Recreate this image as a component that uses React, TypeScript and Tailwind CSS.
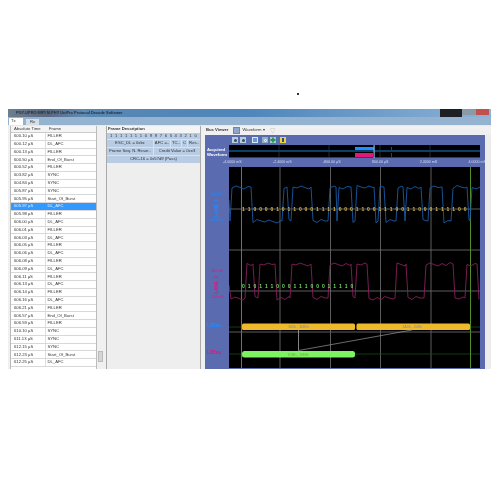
const frames: [string, string][] = [
  ['600.10', 'FILLER'], ['600.12', 'DL_AFC'], ['600.13', 'FILLER'], ['600.50', 'End_Of_Burst'],
  ['600.52', 'FILLER'], ['603.82', 'SYNC'], ['604.84', 'SYNC'], ['605.87', 'SYNC'],
  ['605.95', 'Start_Of_Burst'], ['605.97', 'DL_AFC'], ['605.98', 'FILLER'], ['606.00', 'DL_AFC'],
  ['606.01', 'FILLER'], ['606.03', 'DL_AFC'], ['606.05', 'FILLER'], ['606.06', 'DL_AFC'],
  ['606.08', 'FILLER'], ['606.09', 'DL_AFC'], ['606.11', 'FILLER'], ['606.13', 'DL_AFC'],
  ['606.14', 'FILLER'], ['606.16', 'DL_AFC'], ['606.21', 'FILLER'], ['606.57', 'End_Of_Burst'],
  ['606.59', 'FILLER'], ['610.10', 'SYNC'], ['611.13', 'SYNC'], ['612.15', 'SYNC'],
  ['612.23', 'Start_Of_Burst'], ['612.25', 'DL_AFC'],
]

// high segments of each lane, in page x
const blueHigh: [number, number][] = [[232, 251], [284, 287], [293, 311], [330, 336], [339, 351], [357, 374], [380, 384], [398, 403], [407, 421], [430, 442], [453, 467], [472, 480]]
const redHigh: [number, number][] = [[247, 253], [260, 275], [292, 311], [330, 351], [357, 367], [397, 406], [426, 453], [467, 477]]

const blueBits = '1100001011000111100011001110011000111100'
const redBits = '01011100011100011110'

function wave(high: [number, number][], top: number, bottom: number, start: string) {
  const pts: string[] = [start]
  let x = 229
  let n = 0
  const jitter = () => [1, -1, 0.5, 2, -0.5, 1.5, -1.5, 0][n++ % 8]
  high.forEach(([a, b]) => {
    for (let i = Math.max(x, 231); i < a - 2; i += 4) pts.push(`${i},${bottom + jitter()}`)
    pts.push(`${a - 2},${bottom}`)
    for (let i = a; i < b; i += 4) pts.push(`${i},${top + jitter()}`)
    pts.push(`${b},${top}`)
    x = b + 2
  })
  for (let i = x; i < 480; i += 4) pts.push(`${i},${bottom + jitter()}`)
  return pts.join(' ')
}

function Plot() {
  return (
    <svg width="251" height="201" viewBox="229 167 251 201" className="block bg-black shrink-0" fontFamily="'Liberation Sans', sans-serif">
      {[280, 330.5, 380.5, 431].map((x) => (
        <line key={x} x1={x} x2={x} y1="167" y2="368" stroke="#666" strokeWidth="0.9" />
      ))}
      {[209, 250, 291, 332].map((y) => (
        <line key={y} x1="229" x2="480" y1={y} y2={y} stroke="#666" strokeWidth="0.9" />
      ))}
      <line x1="229" x2="480" y1="327" y2="327" stroke="#164a16" strokeWidth="0.8" />
      <line x1="229" x2="480" y1="354" y2="354" stroke="#164a16" strokeWidth="0.8" />
      <line x1="241.5" x2="241.5" y1="167" y2="368" stroke="#5a9a2c" strokeWidth="0.9" />
      <line x1="470.5" x2="470.5" y1="167" y2="368" stroke="#5a9a2c" strokeWidth="0.9" />

      <polyline points={wave(blueHigh, 187, 221, '229,200')} fill="none" stroke="#1a5aa8" strokeWidth="0.9" strokeLinejoin="round" />
      <polyline points={wave(redHigh, 264, 298, '229,285')} fill="none" stroke="#86205a" strokeWidth="0.9" strokeLinejoin="round" />

      {blueBits.split('').map((b, i) => (
        <text key={i} x={243.5 + i * 5.68} y="210.8" fontSize="5" fontWeight="bold" fill="#dcb84c" textAnchor="middle">{b}</text>
      ))}
      {redBits.split('').map((b, i) => (
        <text key={i} x={243.5 + i * 5.7} y="287.8" fontSize="5" fontWeight="bold" fill="#72dc66" textAnchor="middle">{b}</text>
      ))}

      <rect x="242" y="323.5" width="113" height="6.5" rx="1.5" fill="#eeba2c" />
      <rect x="356.5" y="323.5" width="113.5" height="6.5" rx="1.5" fill="#eeba2c" />
      <rect x="242" y="351" width="113" height="6.5" rx="2.5" fill="#7df262" />
      <line x1="298.5" y1="330" x2="298.5" y2="350.5" stroke="#bbb" strokeWidth="0.7" />
      <line x1="298.5" y1="350.5" x2="412" y2="330" stroke="#999" strokeWidth="0.7" />
      <text x="298.5" y="328.3" fontSize="3.6" fill="#6f8fb0" textAnchor="middle">300h , 3f4Bh</text>
      <text x="412" y="328.3" fontSize="3.6" fill="#6f8fb0" textAnchor="middle">1A0h , 208h</text>
      <text x="298.5" y="355.8" fontSize="3.6" fill="#8f9a50" textAnchor="middle">67Ah , 3f4Bh</text>
    </svg>
  )
}

function Overview() {
  return (
    <svg width="251" height="13" viewBox="229 145 251 13" className="block bg-black shrink-0">
      {[279, 329, 380, 430].map((x) => (
        <line key={x} x1={x} x2={x} y1="145" y2="158" stroke="#444" strokeWidth="0.6" />
      ))}
      <rect x="229" y="150" width="251" height="2" fill="#0a3f68" />
      <rect x="355" y="147" width="19" height="3" fill="#1e90ff" />
      <rect x="355" y="153" width="18" height="4" fill="#e0187c" />
      <rect x="229" y="157" width="251" height="1" fill="#7c1a50" />
      <rect x="373.5" y="145" width="1.2" height="13" fill="#7fb4e0" />
      <rect x="391" y="147" width="1" height="3" fill="#1e4f90" />
      <rect x="391" y="153" width="1" height="4" fill="#7c1a50" />
    </svg>
  )
}

function ToolIcon({ bg, children, className = '' }: { bg: string; children?: React.ReactNode; className?: string }) {
  return (
    <div className={`w-[6px] h-[6px] shrink-0 flex items-center justify-center ${bg} ${className}`}>{children}</div>
  )
}

export default function App() {
  return (
    <div className="w-[500px] h-[500px] bg-white overflow-hidden font-['Liberation_Sans',sans-serif] text-[4.2px] leading-none text-[#333]">
      <div className="h-[109px] pt-[93px]">
        <div className="ml-[297px] w-[1.5px] h-[1.5px] bg-[#333]" />
      </div>

      <div className="ml-2 w-[483px] h-[260px] flex flex-col bg-[#f0f0f0] blur-[0.25px]">
        {/* title bar */}
        <div className="h-2 flex items-center bg-gradient-to-r from-[#5c87ad] via-[#4f86bb] to-[#8cb2d6]">
          <div className="w-[78px] h-full bg-gradient-to-r from-[#6b7f8f] via-[#5a6880] to-[#5f8db8] flex items-center pl-2 text-[#22303c] font-bold text-[3.9px] whitespace-nowrap">
            PGY-UPRO MIPI M-PHY UniPro Protocol Decode Software
          </div>
          <div className="flex-1" />
          <div className="w-[22px] h-full bg-[#1c2024]" />
          <div className="w-[14px] h-[6px] mb-[2px] bg-[#8a9aa8]" />
          <div className="w-[13px] h-[6px] mb-[2px] mr-[2px] bg-[#c0504d]" />
        </div>

        {/* tabs */}
        <div className="h-2 flex items-end gap-[3px] bg-[#93b3d0] pl-[1px]">
          <div className="w-[14px] h-[7px] bg-white flex items-center pl-[2px]">Tx</div>
          <div className="w-[13px] h-[6px] bg-[#d5dde6] flex items-center pl-[4px]">Rx</div>
        </div>

        <div className="flex-1 flex min-h-0 border-t border-[#e8e8e8]">
          {/* frame list */}
          <div className="ml-[2px] w-[87px] bg-white overflow-hidden border-x border-[#bbb]">
            <div className="h-[7px] flex items-center bg-[#f4f4f4] border-b border-[#ccc]">
              <span className="w-[35px] pl-[3px] whitespace-nowrap">Absolute Time</span>
              <span className="pl-[3px]">Frame</span>
            </div>
            {frames.map(([time, name]) => {
              const selected = time === '605.97'
              return (
                <div key={time} className={`h-[7.8px] flex items-center border-b border-[#d8d8d8] ${selected ? 'bg-[#3399ff] text-[#dfefff]' : ''}`}>
                  <span className={`w-[35px] h-full flex items-center pl-[3px] border-r ${selected ? 'border-[#3399ff]' : 'border-[#ddd]'}`}>{time} µS</span>
                  <span className="pl-[1.5px] whitespace-nowrap">{name}</span>
                </div>
              )
            })}
          </div>

          {/* scrollbar */}
          <div className="w-[7px] flex flex-col items-center justify-end pb-[6px] bg-[#f0f0f0]">
            <div className="w-[5px] h-[11px] bg-[#d4d4d4] border border-[#bbb] mb-[1px]" />
          </div>

          {/* frame description */}
          <div className="ml-[2px] w-[95px] flex flex-col border-x border-[#aaa] bg-[#eeeeee]">
            <div className="h-[7px] flex items-center pl-[1px] font-bold bg-[#f4f4f4]">Frame Description</div>
            <div className="h-[6px] flex justify-between items-center px-[3px] bg-[#b8cce4]">
              {['1', '1', '1', '1', '1', '1', '1', '0', '9', '8', '7', '6', '5', '4', '3', '2', '1', '0'].map((b, i) => (
                <span key={i}>{b}</span>
              ))}
            </div>
            <div className="h-2 flex bg-[#b8cce4] border-t border-[#d8e2ee] whitespace-nowrap">
              <span className="w-[47px] flex items-center justify-center border-r border-[#d8e2ee]">ESC_DL = 0xbc</span>
              <span className="w-[17px] flex items-center justify-center border-r border-[#d8e2ee]">AFC =..</span>
              <span className="w-[11px] flex items-center justify-center border-r border-[#d8e2ee]">TC..</span>
              <span className="w-[6px] flex items-center justify-center border-r border-[#d8e2ee]">C</span>
              <span className="flex-1 flex items-center justify-center">Res..</span>
            </div>
            <div className="h-2 flex bg-[#b8cce4] border-t border-[#d8e2ee] whitespace-nowrap">
              <span className="w-[47px] flex items-center justify-center border-r border-[#d8e2ee]">Frame Seq. N. Reser..</span>
              <span className="flex-1 flex items-center justify-center">Credit Value = 0xe3</span>
            </div>
            <div className="h-2 flex items-center justify-center bg-[#b8cce4] border-t border-[#d8e2ee]">CRC-16 = 0x57d9 (Pass)</div>
          </div>

          {/* bus viewer */}
          <div className="ml-[4px] w-[286px] flex flex-col min-w-0">
            <div className="h-[9px] flex items-center gap-[3px] pl-[1px]">
              <span className="font-bold whitespace-nowrap">Bus Viewer</span>
              <div className="w-[7px] h-[7px] ml-[1px] bg-[#8fa6c8] border border-[#6f86a8]" />
              <span className="whitespace-nowrap">Waveform ▾</span>
              <span className="ml-[2px] text-[#c8c8c8] text-[7px]">▽</span>
            </div>
            <div className="flex-1 flex min-h-0">
              <div className="w-[280px] flex flex-col bg-[#5a6bb0] pl-[24px] pr-[5px] min-h-0">
                <div className="h-[10px] flex items-center gap-[2px] pl-[3px]">
                  <ToolIcon bg="bg-[#b9ccd8]"><span className="w-[3px] h-[3px] rounded-full bg-[#33506e]" /></ToolIcon>
                  <ToolIcon bg="bg-[#b9ccd8]"><span className="w-[3px] h-[3px] rounded-full bg-[#33506e]" /></ToolIcon>
                  <ToolIcon bg="bg-[#5a9bd8]" className="ml-[4px] border border-[#dbe8f2]" />
                  <ToolIcon bg="bg-[#8fb0c8]" className="ml-[2px]"><span className="w-[3px] h-[3px] rounded-full border-[0.5px] border-white" /></ToolIcon>
                  <ToolIcon bg="bg-[#a9c6c8]">
                    <svg width="6" height="6" viewBox="0 0 6 6"><path d="M3 0.5v5M0.5 3h5" stroke="#1f9a4c" strokeWidth="1.8" /></svg>
                  </ToolIcon>
                  <ToolIcon bg="bg-[#e6d640]" className="ml-[2px]"><span className="w-[2px] h-[4px] bg-[#3a4a80]" /></ToolIcon>
                </div>
                <div className="relative h-[13px]">
                  <Overview />
                  <div className="absolute -left-[22px] top-[2px] text-white font-bold leading-[5px]">Acquired<br />Waveform</div>
                </div>
                <div className="h-[9px] flex items-center justify-between -mx-[6px] text-[3.6px] text-[#d8dff0] whitespace-nowrap">
                  <span>-4.0000 mS</span>
                  <span>-2.4000 mS</span>
                  <span>-800.00 µS</span>
                  <span>800.00 µS</span>
                  <span>2.4000 mS</span>
                  <span>4.0000 mS</span>
                </div>
                <div className="relative flex-1 min-h-0">
                  <Plot />
                  <div className="absolute -left-[23px] top-[26px] w-[22px] h-[29px] flex flex-col items-center justify-between text-[#1e8cff] text-[3.4px] whitespace-nowrap">
                    <span>164 mV</span>
                    <span className="font-bold text-[4.6px] [writing-mode:vertical-rl] rotate-180">LANE_1</span>
                    <span>-164 mV</span>
                  </div>
                  <div className="absolute -left-[23px] top-[103px] w-[22px] h-[29px] flex flex-col items-center justify-between text-[#e0187c] text-[3.4px] whitespace-nowrap">
                    <span>164 mV</span>
                    <span className="font-bold text-[4.6px] [writing-mode:vertical-rl] rotate-180">LANE_2</span>
                    <span>-164 mV</span>
                  </div>
                  <div className="absolute -left-[22px] top-[157px] text-[#1e8cff] font-bold text-[4.6px]">L2Bus</div>
                  <div className="absolute -left-[22px] top-[184px] text-[#e0187c] font-bold text-[4.6px]">L2Bus</div>
                </div>
              </div>
              <div className="w-[6px] bg-[#ececec]" />
            </div>
          </div>
        </div>
      </div>
    </div>
  )
}
